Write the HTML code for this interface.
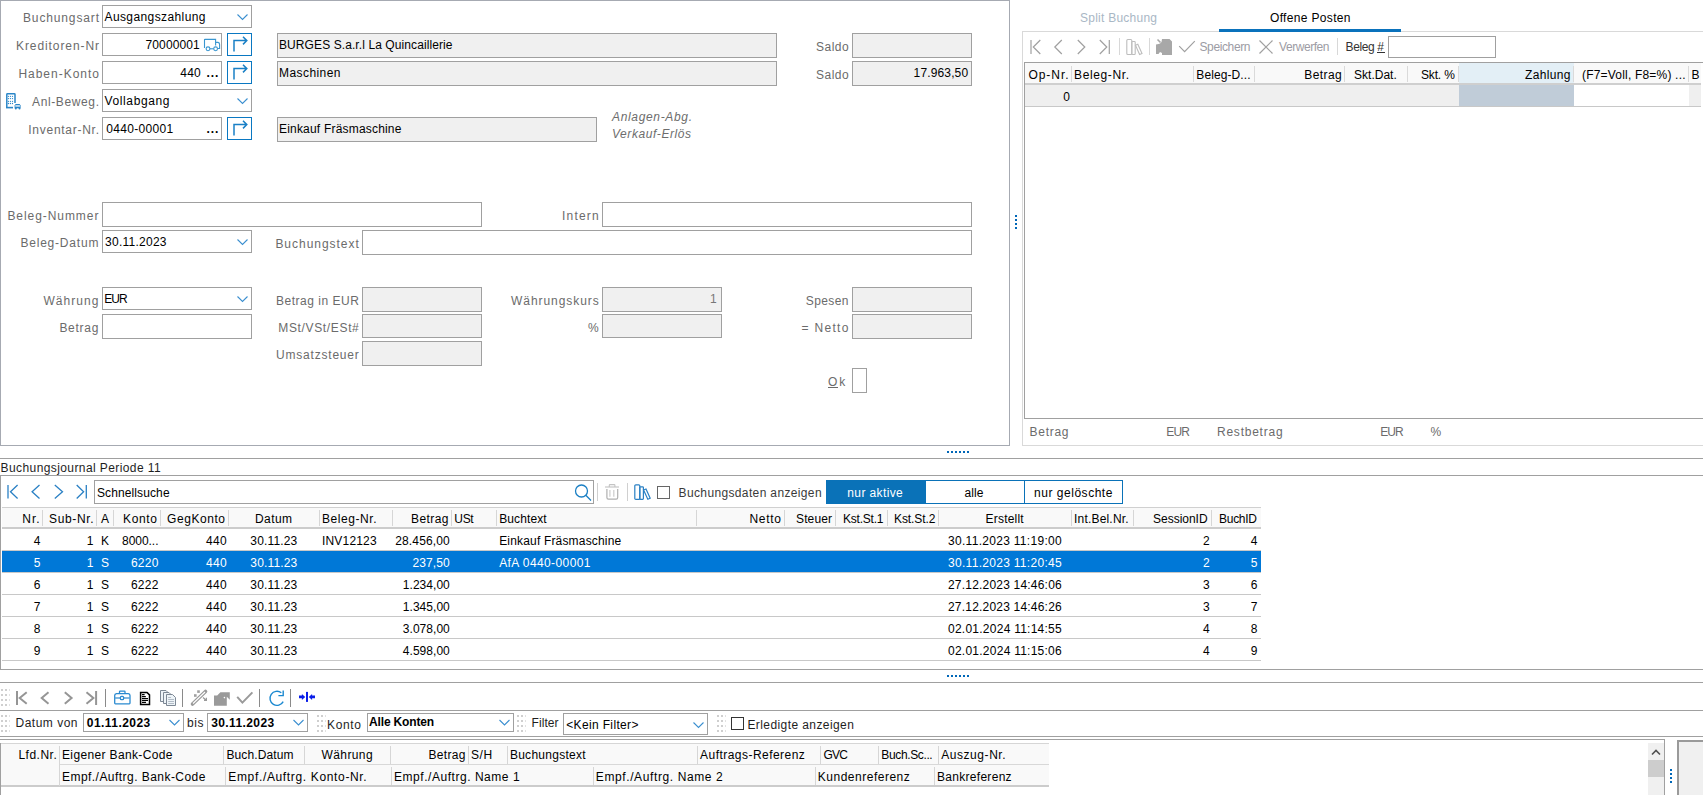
<!DOCTYPE html>
<html><head><meta charset="utf-8"><style>
html,body{margin:0;padding:0;width:1703px;height:795px;overflow:hidden;background:#fff;position:relative}
.a{position:absolute;box-sizing:content-box}
.t{position:absolute;white-space:nowrap;font-family:"Liberation Sans",sans-serif}
svg.a{overflow:visible}
</style></head><body>
<div class="a" style="left:0px;top:0px;width:1008px;height:444px;border:1px solid #a6aab2;background:#fff;"></div>
<div class="t" style="left:23.00px;top:9.84px;font-size:12px;line-height:16px;color:#6b6b6b;letter-spacing:0.862px;">Buchungsart</div>
<div class="t" style="left:16.00px;top:37.84px;font-size:12px;line-height:16px;color:#6b6b6b;letter-spacing:0.914px;">Kreditoren-Nr</div>
<div class="t" style="left:18.40px;top:65.84px;font-size:12px;line-height:16px;color:#6b6b6b;letter-spacing:0.988px;">Haben-Konto</div>
<div class="t" style="left:32.00px;top:93.84px;font-size:12px;line-height:16px;color:#6b6b6b;letter-spacing:0.626px;">Anl-Beweg.</div>
<div class="t" style="left:28.30px;top:121.84px;font-size:12px;line-height:16px;color:#6b6b6b;letter-spacing:0.728px;">Inventar-Nr.</div>
<div class="a" style="left:102px;top:5px;width:148px;height:21px;border:1px solid #a0a0a0;background:#fff;"></div>
<svg class="a" style="left:237px;top:14px;" width="11" height="6" viewBox="0 0 11 6"><polyline points="0.5,0.5 5.5,5.5 10.5,0.5" fill="none" stroke="#3b8fd0" stroke-width="1.1"/></svg>
<div class="t" style="left:104.50px;top:8.84px;font-size:12px;line-height:16px;color:#000;letter-spacing:0.399px;">Ausgangszahlung</div>
<div class="a" style="left:102px;top:89px;width:148px;height:21px;border:1px solid #a0a0a0;background:#fff;"></div>
<svg class="a" style="left:237px;top:98px;" width="11" height="6" viewBox="0 0 11 6"><polyline points="0.5,0.5 5.5,5.5 10.5,0.5" fill="none" stroke="#3b8fd0" stroke-width="1.1"/></svg>
<div class="t" style="left:104.50px;top:92.84px;font-size:12px;line-height:16px;color:#000;letter-spacing:0.623px;">Vollabgang</div>
<div class="a" style="left:102px;top:33px;width:118px;height:21px;border:1px solid #a0a0a0;background:#fff;"></div>
<div class="t" style="left:145.60px;top:36.84px;font-size:12px;line-height:16px;color:#000;letter-spacing:0.087px;">70000001</div>
<svg class="a" style="left:202px;top:36px;" width="20" height="16" viewBox="0 0 20 16"><g fill="none" stroke="#3a96d0" stroke-width="1.1"><path d="M2.5,12 V3.6 Q2.5,3.4 3,3.4 H13.6 V9.5"/><path d="M13.6,6.4 H16 Q17.6,6.6 17.6,8.5 V12.5 H16"/><circle cx="6" cy="12.8" r="1.9"/><circle cx="13.6" cy="12.8" r="1.9"/><path d="M8,12.8 H11.6"/></g></svg>
<div class="a" style="left:227px;top:33px;width:23px;height:21px;border:1px solid #0a78c2;background:#fff;"></div>
<svg class="a" style="left:227px;top:33px;" width="25" height="23" viewBox="0 0 25 23"><path d="M7,18.5 V7.6 H19.6 M16,3.8 L19.8,7.6 L16,11.4" fill="none" stroke="#1a80c6" stroke-width="1.5"/></svg>
<div class="a" style="left:102px;top:61px;width:118px;height:21px;border:1px solid #a0a0a0;background:#fff;"></div>
<div class="t" style="left:180.20px;top:64.84px;font-size:12px;line-height:16px;color:#000;letter-spacing:0.289px;">440</div>
<div class="t" style="left:206.50px;top:64.84px;font-size:12px;line-height:16px;color:#000;letter-spacing:0.900px;font-weight:bold;">...</div>
<div class="a" style="left:227px;top:61px;width:23px;height:21px;border:1px solid #0a78c2;background:#fff;"></div>
<svg class="a" style="left:227px;top:61px;" width="25" height="23" viewBox="0 0 25 23"><path d="M7,18.5 V7.6 H19.6 M16,3.8 L19.8,7.6 L16,11.4" fill="none" stroke="#1a80c6" stroke-width="1.5"/></svg>
<div class="a" style="left:102px;top:117px;width:118px;height:21px;border:1px solid #a0a0a0;background:#fff;"></div>
<div class="t" style="left:106.20px;top:120.84px;font-size:12px;line-height:16px;color:#000;letter-spacing:0.326px;">0440-00001</div>
<div class="t" style="left:206.50px;top:120.84px;font-size:12px;line-height:16px;color:#000;letter-spacing:0.900px;font-weight:bold;">...</div>
<div class="a" style="left:227px;top:117px;width:23px;height:21px;border:1px solid #0a78c2;background:#fff;"></div>
<svg class="a" style="left:227px;top:117px;" width="25" height="23" viewBox="0 0 25 23"><path d="M7,18.5 V7.6 H19.6 M16,3.8 L19.8,7.6 L16,11.4" fill="none" stroke="#1a80c6" stroke-width="1.5"/></svg>
<svg class="a" style="left:0px;top:88px;" width="24" height="24" viewBox="0 0 24 24"><path d="M6.8,19.6 V6.4 Q6.8,5.7 7.5,5.7 H14.3 Q15,5.7 15,6.4 V15" fill="none" stroke="#2a86c8" stroke-width="1.5"/><path d="M6,19.6 H13" stroke="#2a86c8" stroke-width="1.6"/><g fill="#2a86c8"><circle cx="8.45" cy="8.3" r="0.65"/><circle cx="8.45" cy="10.6" r="0.65"/><circle cx="8.45" cy="13.3" r="0.65"/><circle cx="8.45" cy="15.5" r="0.65"/><circle cx="10.45" cy="8.3" r="0.65"/><circle cx="10.45" cy="10.6" r="0.65"/><circle cx="10.45" cy="13.3" r="0.65"/><circle cx="10.45" cy="15.5" r="0.65"/><circle cx="12.5" cy="8.3" r="0.65"/><circle cx="12.5" cy="10.6" r="0.65"/><circle cx="12.5" cy="13.3" r="0.65"/><circle cx="12.5" cy="15.5" r="0.65"/></g><path d="M14.6,20.2 V17.6 L15.6,16 H19.6 L20.6,17.6 V20.2 Z" fill="#2a86c8"/><rect x="15.3" y="17.3" width="4.6" height="1.3" fill="#fff"/><circle cx="15.8" cy="20.4" r="1" fill="#2a86c8"/><circle cx="19.5" cy="20.4" r="1" fill="#2a86c8"/></svg>
<div class="a" style="left:277px;top:33px;width:498px;height:23px;border:1px solid #a0a0a0;background:#f0f0f0;"></div>
<div class="t" style="left:279.00px;top:36.84px;font-size:12px;line-height:16px;color:#000;letter-spacing:0.092px;">BURGES S.a.r.l La Quincaillerie</div>
<div class="a" style="left:277px;top:61px;width:498px;height:23px;border:1px solid #a0a0a0;background:#f0f0f0;"></div>
<div class="t" style="left:279.00px;top:64.84px;font-size:12px;line-height:16px;color:#000;letter-spacing:0.433px;">Maschinen</div>
<div class="a" style="left:277px;top:117px;width:318px;height:23px;border:1px solid #a0a0a0;background:#f0f0f0;"></div>
<div class="t" style="left:279.00px;top:120.84px;font-size:12px;line-height:16px;color:#000;letter-spacing:0.194px;">Einkauf Fräsmaschine</div>
<div class="t" style="left:816.00px;top:38.84px;font-size:12px;line-height:16px;color:#6b6b6b;letter-spacing:0.477px;">Saldo</div>
<div class="t" style="left:816.00px;top:66.84px;font-size:12px;line-height:16px;color:#6b6b6b;letter-spacing:0.477px;">Saldo</div>
<div class="a" style="left:852px;top:33px;width:118px;height:23px;border:1px solid #a0a0a0;background:#f0f0f0;"></div>
<div class="a" style="left:852px;top:61px;width:118px;height:23px;border:1px solid #a0a0a0;background:#f0f0f0;"></div>
<div class="t" style="left:913.60px;top:64.84px;font-size:12px;line-height:16px;color:#000;letter-spacing:0.139px;">17.963,50</div>
<div class="t" style="left:612.00px;top:108.84px;font-size:12px;line-height:16px;color:#6d6d6d;letter-spacing:0.661px;font-style:italic;">Anlagen-Abg.</div>
<div class="t" style="left:612.00px;top:125.84px;font-size:12px;line-height:16px;color:#6d6d6d;letter-spacing:0.563px;font-style:italic;">Verkauf-Erlös</div>
<div class="t" style="left:7.40px;top:207.84px;font-size:12px;line-height:16px;color:#6b6b6b;letter-spacing:0.937px;">Beleg-Nummer</div>
<div class="a" style="left:102px;top:202px;width:378px;height:23px;border:1px solid #a0a0a0;background:#fff;"></div>
<div class="t" style="left:562.00px;top:207.84px;font-size:12px;line-height:16px;color:#6b6b6b;letter-spacing:1.203px;">Intern</div>
<div class="a" style="left:602px;top:202px;width:368px;height:23px;border:1px solid #a0a0a0;background:#fff;"></div>
<div class="t" style="left:20.40px;top:234.84px;font-size:12px;line-height:16px;color:#6b6b6b;letter-spacing:0.797px;">Beleg-Datum</div>
<div class="a" style="left:102px;top:230px;width:148px;height:21px;border:1px solid #a0a0a0;background:#fff;"></div>
<svg class="a" style="left:237px;top:239px;" width="11" height="6" viewBox="0 0 11 6"><polyline points="0.5,0.5 5.5,5.5 10.5,0.5" fill="none" stroke="#3b8fd0" stroke-width="1.1"/></svg>
<div class="t" style="left:105.10px;top:233.84px;font-size:12px;line-height:16px;color:#000;letter-spacing:0.248px;">30.11.2023</div>
<div class="t" style="left:275.40px;top:235.84px;font-size:12px;line-height:16px;color:#6b6b6b;letter-spacing:0.971px;">Buchungstext</div>
<div class="a" style="left:362px;top:230px;width:608px;height:23px;border:1px solid #a0a0a0;background:#fff;"></div>
<div class="t" style="left:43.40px;top:292.84px;font-size:12px;line-height:16px;color:#6b6b6b;letter-spacing:1.051px;">Währung</div>
<div class="a" style="left:102px;top:287px;width:148px;height:21px;border:1px solid #a0a0a0;background:#fff;"></div>
<svg class="a" style="left:237px;top:296px;" width="11" height="6" viewBox="0 0 11 6"><polyline points="0.5,0.5 5.5,5.5 10.5,0.5" fill="none" stroke="#3b8fd0" stroke-width="1.1"/></svg>
<div class="t" style="left:104.20px;top:290.84px;font-size:12px;line-height:16px;color:#000;letter-spacing:-0.918px;">EUR</div>
<div class="t" style="left:59.40px;top:319.84px;font-size:12px;line-height:16px;color:#6b6b6b;letter-spacing:0.729px;">Betrag</div>
<div class="a" style="left:102px;top:314px;width:148px;height:23px;border:1px solid #a0a0a0;background:#fff;"></div>
<div class="t" style="left:276.00px;top:292.84px;font-size:12px;line-height:16px;color:#6b6b6b;letter-spacing:0.508px;">Betrag in EUR</div>
<div class="a" style="left:362px;top:287px;width:118px;height:23px;border:1px solid #a0a0a0;background:#f0f0f0;"></div>
<div class="t" style="left:278.30px;top:319.84px;font-size:12px;line-height:16px;color:#6b6b6b;letter-spacing:0.649px;">MSt/VSt/ESt#</div>
<div class="a" style="left:362px;top:314px;width:118px;height:22px;border:1px solid #a0a0a0;background:#f0f0f0;"></div>
<div class="t" style="left:276.00px;top:346.84px;font-size:12px;line-height:16px;color:#6b6b6b;letter-spacing:0.798px;">Umsatzsteuer</div>
<div class="a" style="left:362px;top:341px;width:118px;height:23px;border:1px solid #a0a0a0;background:#f0f0f0;"></div>
<div class="t" style="left:511.00px;top:292.84px;font-size:12px;line-height:16px;color:#6b6b6b;letter-spacing:0.940px;">Währungskurs</div>
<div class="a" style="left:602px;top:287px;width:118px;height:23px;border:1px solid #a0a0a0;background:#f0f0f0;"></div>
<div class="t" style="left:710.03px;top:290.84px;font-size:12px;line-height:16px;color:#777;letter-spacing:0.450px;">1</div>
<div class="t" style="left:588.03px;top:319.84px;font-size:12px;line-height:16px;color:#6b6b6b;letter-spacing:0.450px;">%</div>
<div class="a" style="left:602px;top:314px;width:118px;height:22px;border:1px solid #a0a0a0;background:#f0f0f0;"></div>
<div class="t" style="left:805.80px;top:292.84px;font-size:12px;line-height:16px;color:#6b6b6b;letter-spacing:0.380px;">Spesen</div>
<div class="a" style="left:852px;top:287px;width:118px;height:23px;border:1px solid #a0a0a0;background:#f0f0f0;"></div>
<div class="t" style="left:801.60px;top:319.84px;font-size:12px;line-height:16px;color:#6b6b6b;letter-spacing:1.296px;">= Netto</div>
<div class="a" style="left:852px;top:314px;width:118px;height:23px;border:1px solid #a0a0a0;background:#f0f0f0;"></div>
<div class="t" style="left:828.00px;top:373.84px;font-size:12px;line-height:16px;color:#6b6b6b;letter-spacing:1.966px;">Ok</div>
<div class="a" style="left:828px;top:387px;width:10px;height:1px;background:#6b6b6b"></div>
<div class="a" style="left:852px;top:368px;width:13px;height:23px;border:1px solid #a0a0a0;background:#fff;"></div>
<div class="a" style="left:947px;top:451px;width:2px;height:2px;background:#0067b8"></div>
<div class="a" style="left:951px;top:451px;width:2px;height:2px;background:#0067b8"></div>
<div class="a" style="left:955px;top:451px;width:2px;height:2px;background:#0067b8"></div>
<div class="a" style="left:959px;top:451px;width:2px;height:2px;background:#0067b8"></div>
<div class="a" style="left:963px;top:451px;width:2px;height:2px;background:#0067b8"></div>
<div class="a" style="left:967px;top:451px;width:2px;height:2px;background:#0067b8"></div>
<div class="a" style="left:1015px;top:215px;width:2px;height:2px;background:#0067b8"></div>
<div class="a" style="left:1015px;top:219px;width:2px;height:2px;background:#0067b8"></div>
<div class="a" style="left:1015px;top:223px;width:2px;height:2px;background:#0067b8"></div>
<div class="a" style="left:1015px;top:227px;width:2px;height:2px;background:#0067b8"></div>
<div class="t" style="left:1080.00px;top:9.84px;font-size:12px;line-height:16px;color:#a9b7c5;letter-spacing:0.245px;">Split Buchung</div>
<div class="t" style="left:1270.00px;top:9.84px;font-size:12px;line-height:16px;color:#000;letter-spacing:0.333px;">Offene Posten</div>
<div class="a" style="left:1219px;top:29px;width:182px;height:3px;background:#0a72bc"></div>
<div class="a" style="left:1022px;top:31px;width:197px;height:1px;background:#d9d9d9"></div>
<div class="a" style="left:1401px;top:31px;width:302px;height:1px;background:#d9d9d9"></div>
<div class="a" style="left:1022px;top:31px;width:1px;height:415px;background:#d9d9d9"></div>
<div class="a" style="left:1022px;top:445px;width:681px;height:1px;background:#d9d9d9"></div>
<svg class="a" style="left:1028.7px;top:40px;" width="83.29999999999995" height="14" viewBox="0 0 83.29999999999995 14"><g fill="none" stroke="#a0a0a0" stroke-width="1.2"><path d="M2.0,0 V14"/><path d="M11.299999999999955,0 L4.2999999999999545,7.0 L11.299999999999955,14"/><path d="M32.799999999999955,0 L25.799999999999955,7.0 L32.799999999999955,14"/><path d="M48.799999999999955,0 L55.799999999999955,7.0 L48.799999999999955,14"/><path d="M70.79999999999995,0 L77.79999999999995,7.0 L70.79999999999995,14"/><path d="M80.29999999999995,0 V14"/></g></svg>
<div class="a" style="left:1119px;top:38px;width:1px;height:17px;background:#d8d8d8"></div>
<svg class="a" style="left:1125px;top:38px;" width="18" height="18" viewBox="0 0 18 18"><g fill="none" stroke="#bdbdbd" stroke-width="1.1"><rect x="1.8" y="1.5" width="5" height="15" rx="1"/><rect x="6.8" y="3.5" width="3.4" height="13" rx="0.8"/><path d="M10.5,7.2 L12.8,6.3 L17,15.5 L14.6,16.5 Z"/></g></svg>
<div class="a" style="left:1149px;top:38px;width:1px;height:17px;background:#d8d8d8"></div>
<svg class="a" style="left:1155px;top:38px;" width="18" height="18" viewBox="0 0 18 18"><path fill="#a8a8a8" d="M7,1 H14.5 L17,3.5 V17 H7 V15 L5,14 L3.5,16 H1 V6.5 L3.5,6 L5,5.5 L6.5,4 Z"/><path d="M2.5,1.5 L5.5,4.5" stroke="#a8a8a8" stroke-width="1.6"/></svg>
<svg class="a" style="left:1178px;top:40px;" width="18" height="13" viewBox="0 0 18 13"><path d="M1.2,6.2 L6.6,11.6 L16.8,1.2" fill="none" stroke="#a0a0a0" stroke-width="1.2"/></svg>
<div class="t" style="left:1199.50px;top:38.84px;font-size:12px;line-height:16px;color:#9c9ca4;letter-spacing:-0.380px;">Speichern</div>
<svg class="a" style="left:1258px;top:39px;" width="16" height="16" viewBox="0 0 16 16"><path d="M1.5,1.5 L14.5,14.5 M14.5,1.5 L1.5,14.5" fill="none" stroke="#a0a0a0" stroke-width="1.2"/></svg>
<div class="t" style="left:1279.00px;top:38.84px;font-size:12px;line-height:16px;color:#9c9ca4;letter-spacing:-0.442px;">Verwerfen</div>
<div class="a" style="left:1337px;top:38px;width:1px;height:17px;background:#d8d8d8"></div>
<div class="t" style="left:1345.50px;top:38.84px;font-size:12px;line-height:16px;color:#333;letter-spacing:-0.367px;">Beleg #</div>
<div class="a" style="left:1377px;top:52px;width:8px;height:1px;background:#333"></div>
<div class="a" style="left:1388px;top:36px;width:106px;height:20px;border:1px solid #a0a0a0;background:#fff;"></div>
<div class="a" style="left:1024px;top:62px;width:1px;height:357px;background:#a0a0a0"></div>
<div class="a" style="left:1024px;top:62px;width:679px;height:1px;background:#a0a0a0"></div>
<div class="a" style="left:1024px;top:418px;width:679px;height:1px;background:#a0a0a0"></div>
<div class="a" style="left:1025px;top:63px;width:676px;height:20px;background:#f9f9f9"></div>
<div class="a" style="left:1459px;top:63px;width:115px;height:20px;background:#e3eff6"></div>
<div class="a" style="left:1025px;top:83px;width:676px;height:2px;background:#cfcfcf"></div>
<div class="a" style="left:1025px;top:85px;width:676px;height:21px;background:#efefef"></div>
<div class="a" style="left:1459px;top:85px;width:115px;height:21px;background:#c0ccd8"></div>
<div class="a" style="left:1574px;top:85px;width:115px;height:21px;background:#ffffff"></div>
<div class="a" style="left:1025px;top:106px;width:676px;height:1px;background:#c8c8c8"></div>
<div class="a" style="left:1071px;top:66px;width:1px;height:16px;background:#dadada"></div>
<div class="a" style="left:1193px;top:66px;width:1px;height:16px;background:#dadada"></div>
<div class="a" style="left:1254px;top:66px;width:1px;height:16px;background:#dadada"></div>
<div class="a" style="left:1344px;top:66px;width:1px;height:16px;background:#dadada"></div>
<div class="a" style="left:1407px;top:66px;width:1px;height:16px;background:#dadada"></div>
<div class="a" style="left:1458px;top:66px;width:1px;height:16px;background:#dadada"></div>
<div class="a" style="left:1573px;top:66px;width:1px;height:16px;background:#dadada"></div>
<div class="a" style="left:1688px;top:66px;width:1px;height:16px;background:#dadada"></div>
<div class="t" style="left:1028.50px;top:66.84px;font-size:12px;line-height:16px;color:#000;letter-spacing:0.932px;">Op-Nr.</div>
<div class="t" style="left:1074.00px;top:66.84px;font-size:12px;line-height:16px;color:#000;letter-spacing:0.622px;">Beleg-Nr.</div>
<div class="t" style="left:1196.30px;top:66.84px;font-size:12px;line-height:16px;color:#000;letter-spacing:0.093px;">Beleg-D...</div>
<div class="t" style="left:1304.30px;top:66.84px;font-size:12px;line-height:16px;color:#000;letter-spacing:0.409px;">Betrag</div>
<div class="t" style="left:1354.00px;top:66.84px;font-size:12px;line-height:16px;color:#000;letter-spacing:0.017px;">Skt.Dat.</div>
<div class="t" style="left:1421.00px;top:66.84px;font-size:12px;line-height:16px;color:#000;letter-spacing:-0.175px;">Skt. %</div>
<div class="t" style="left:1525.00px;top:66.84px;font-size:12px;line-height:16px;color:#000;letter-spacing:0.339px;">Zahlung</div>
<div class="t" style="left:1582.00px;top:66.84px;font-size:12px;line-height:16px;color:#000;letter-spacing:0.192px;">(F7=Voll, F8=%) ...</div>
<div class="t" style="left:1691.50px;top:66.84px;font-size:12px;line-height:16px;color:#000;letter-spacing:0.450px;">B</div>
<div class="t" style="left:1063.33px;top:88.84px;font-size:12px;line-height:16px;color:#000;letter-spacing:0.450px;">0</div>
<div class="t" style="left:1029.50px;top:423.84px;font-size:12px;line-height:16px;color:#6b6b6b;letter-spacing:0.729px;">Betrag</div>
<div class="t" style="left:1166.30px;top:423.84px;font-size:12px;line-height:16px;color:#6b6b6b;letter-spacing:-0.918px;">EUR</div>
<div class="t" style="left:1217.00px;top:423.84px;font-size:12px;line-height:16px;color:#6b6b6b;letter-spacing:0.766px;">Restbetrag</div>
<div class="t" style="left:1380.20px;top:423.84px;font-size:12px;line-height:16px;color:#6b6b6b;letter-spacing:-0.968px;">EUR</div>
<div class="t" style="left:1430.40px;top:423.84px;font-size:12px;line-height:16px;color:#6b6b6b;letter-spacing:0.450px;">%</div>
<div class="a" style="left:0px;top:458px;width:1703px;height:1px;background:#a0a0a0"></div>
<div class="t" style="left:0.60px;top:459.84px;font-size:12px;line-height:16px;color:#1e1e1e;letter-spacing:0.404px;">Buchungsjournal Periode 11</div>
<div class="a" style="left:0px;top:475px;width:1703px;height:1px;background:#a0a0a0"></div>
<div class="a" style="left:0px;top:475px;width:1px;height:195px;background:#a0a0a0"></div>
<div class="a" style="left:0px;top:669px;width:1703px;height:1px;background:#a0a0a0"></div>
<svg class="a" style="left:6.300000000000001px;top:485px;" width="83.3" height="13.5" viewBox="0 0 83.3 13.5"><g fill="none" stroke="#2a80c4" stroke-width="1.3"><path d="M2.0,0 V13.5"/><path d="M11.599999999999998,0 L4.5,6.75 L11.599999999999998,13.5"/><path d="M33.5,0 L26.099999999999998,6.75 L33.5,13.5"/><path d="M48.8,0 L56.5,6.75 L48.8,13.5"/><path d="M70.7,0 L77.60000000000001,6.75 L70.7,13.5"/><path d="M80.3,0 V13.5"/></g></svg>
<div class="a" style="left:94px;top:480px;width:498px;height:22px;border:1px solid #a0a0a0;background:#fff;"></div>
<div class="t" style="left:96.90px;top:484.84px;font-size:12px;line-height:16px;color:#000;letter-spacing:0.120px;">Schnellsuche</div>
<svg class="a" style="left:573px;top:483px;" width="20" height="19" viewBox="0 0 20 19"><g fill="none" stroke="#1a7fc4" stroke-width="1.3"><circle cx="8.5" cy="8" r="6"/><path d="M12.8,12.3 L18,17.5"/></g></svg>
<div class="a" style="left:597px;top:483px;width:1px;height:18px;background:#d0d0d0"></div>
<svg class="a" style="left:600px;top:480px;" width="24" height="24" viewBox="0 0 24 24"><path d="M5,7 H19" stroke="#d2d2d2" stroke-width="1.5"/><path d="M9.3,7 V5.3 Q9.3,4.6 10,4.6 H14.2 Q14.9,4.6 14.9,5.3 V7" fill="none" stroke="#c4c4c4" stroke-width="1.1"/><path d="M6.9,9 V17.6 Q6.9,19.2 8.4,19.2 H16.2 Q17.7,19.2 17.7,17.6 V9" fill="none" stroke="#b0b0b0" stroke-width="1.2"/><path d="M9.9,10 V16.8 M13.8,10 V16.8" stroke="#d0d0d0" stroke-width="1.3"/></svg>
<div class="a" style="left:627px;top:483px;width:1px;height:18px;background:#d0d0d0"></div>
<svg class="a" style="left:633px;top:483px;" width="18" height="18" viewBox="0 0 18 18"><g fill="none" stroke="#2a80c4" stroke-width="1.2"><rect x="1.8" y="1.8" width="5" height="14.6" rx="1"/><rect x="6.8" y="3.8" width="3.6" height="12.6" rx="0.8"/><path d="M10.6,7 L13,6 L17.2,15.2 L14.8,16.3 Z"/></g></svg>
<div class="a" style="left:657px;top:486px;width:11px;height:11px;border:1px solid #666;background:#fff;"></div>
<div class="t" style="left:678.60px;top:484.84px;font-size:12px;line-height:16px;color:#3a3a3a;letter-spacing:0.359px;">Buchungsdaten anzeigen</div>
<div class="a" style="left:826px;top:480px;width:100px;height:24px;background:#0a72b8"></div>
<div class="a" style="left:925px;top:480px;width:196px;height:22px;border:1px solid #0a72b8;background:#fff;"></div>
<div class="a" style="left:1024px;top:480px;width:1px;height:24px;background:#0a72b8"></div>
<div class="t" style="left:847.30px;top:484.84px;font-size:12px;line-height:16px;color:#fff;letter-spacing:0.386px;">nur aktive</div>
<div class="t" style="left:964.40px;top:484.84px;font-size:12px;line-height:16px;color:#000;letter-spacing:0.140px;">alle</div>
<div class="t" style="left:1034.00px;top:484.84px;font-size:12px;line-height:16px;color:#000;letter-spacing:0.529px;">nur gelöschte</div>
<div class="a" style="left:2px;top:507px;width:1259px;height:1px;background:#d0d0d0"></div>
<div class="a" style="left:2px;top:508px;width:1259px;height:19px;background:#f9f9f9"></div>
<div class="a" style="left:2px;top:527px;width:1259px;height:2px;background:#cccccc"></div>
<div class="a" style="left:42px;top:510px;width:1px;height:16px;background:#d6d6d6"></div>
<div class="a" style="left:96px;top:510px;width:1px;height:16px;background:#d6d6d6"></div>
<div class="a" style="left:113px;top:510px;width:1px;height:16px;background:#d6d6d6"></div>
<div class="a" style="left:160px;top:510px;width:1px;height:16px;background:#d6d6d6"></div>
<div class="a" style="left:228px;top:510px;width:1px;height:16px;background:#d6d6d6"></div>
<div class="a" style="left:319px;top:510px;width:1px;height:16px;background:#d6d6d6"></div>
<div class="a" style="left:392px;top:510px;width:1px;height:16px;background:#d6d6d6"></div>
<div class="a" style="left:451px;top:510px;width:1px;height:16px;background:#d6d6d6"></div>
<div class="a" style="left:496px;top:510px;width:1px;height:16px;background:#d6d6d6"></div>
<div class="a" style="left:696px;top:510px;width:1px;height:16px;background:#d6d6d6"></div>
<div class="a" style="left:784px;top:510px;width:1px;height:16px;background:#d6d6d6"></div>
<div class="a" style="left:835px;top:510px;width:1px;height:16px;background:#d6d6d6"></div>
<div class="a" style="left:887px;top:510px;width:1px;height:16px;background:#d6d6d6"></div>
<div class="a" style="left:938px;top:510px;width:1px;height:16px;background:#d6d6d6"></div>
<div class="a" style="left:1071px;top:510px;width:1px;height:16px;background:#d6d6d6"></div>
<div class="a" style="left:1133px;top:510px;width:1px;height:16px;background:#d6d6d6"></div>
<div class="a" style="left:1211px;top:510px;width:1px;height:16px;background:#d6d6d6"></div>
<div class="t" style="left:22.30px;top:510.84px;font-size:12px;line-height:16px;color:#000;letter-spacing:0.982px;">Nr.</div>
<div class="t" style="left:49.00px;top:510.84px;font-size:12px;line-height:16px;color:#000;letter-spacing:0.669px;">Sub-Nr.</div>
<div class="t" style="left:101.00px;top:510.84px;font-size:12px;line-height:16px;color:#000;letter-spacing:0.450px;">A</div>
<div class="t" style="left:123.00px;top:510.84px;font-size:12px;line-height:16px;color:#000;letter-spacing:0.660px;">Konto</div>
<div class="t" style="left:167.00px;top:510.84px;font-size:12px;line-height:16px;color:#000;letter-spacing:0.565px;">GegKonto</div>
<div class="t" style="left:255.00px;top:510.84px;font-size:12px;line-height:16px;color:#000;letter-spacing:0.414px;">Datum</div>
<div class="t" style="left:322.00px;top:510.84px;font-size:12px;line-height:16px;color:#000;letter-spacing:0.572px;">Beleg-Nr.</div>
<div class="t" style="left:411.10px;top:510.84px;font-size:12px;line-height:16px;color:#000;letter-spacing:0.409px;">Betrag</div>
<div class="t" style="left:454.30px;top:510.84px;font-size:12px;line-height:16px;color:#000;letter-spacing:-0.302px;">USt</div>
<div class="t" style="left:499.20px;top:510.84px;font-size:12px;line-height:16px;color:#000;letter-spacing:0.101px;">Buchtext</div>
<div class="t" style="left:749.40px;top:510.84px;font-size:12px;line-height:16px;color:#000;letter-spacing:0.729px;">Netto</div>
<div class="t" style="left:796.00px;top:510.84px;font-size:12px;line-height:16px;color:#000;letter-spacing:0.129px;">Steuer</div>
<div class="t" style="left:843.00px;top:510.84px;font-size:12px;line-height:16px;color:#000;letter-spacing:-0.217px;">Kst.St.1</div>
<div class="t" style="left:894.00px;top:510.84px;font-size:12px;line-height:16px;color:#000;letter-spacing:-0.089px;">Kst.St.2</div>
<div class="t" style="left:985.60px;top:510.84px;font-size:12px;line-height:16px;color:#000;letter-spacing:0.189px;">Erstellt</div>
<div class="t" style="left:1074.00px;top:510.84px;font-size:12px;line-height:16px;color:#000;letter-spacing:0.191px;">Int.Bel.Nr.</div>
<div class="t" style="left:1153.00px;top:510.84px;font-size:12px;line-height:16px;color:#000;letter-spacing:-0.012px;">SessionID</div>
<div class="t" style="left:1219.00px;top:510.84px;font-size:12px;line-height:16px;color:#000;letter-spacing:-0.271px;">BuchID</div>
<div class="a" style="left:2px;top:550px;width:1259px;height:1px;background:#c8c8c8"></div>
<div class="t" style="left:33.83px;top:532.84px;font-size:12px;line-height:16px;color:#000;letter-spacing:0.450px;">4</div>
<div class="t" style="left:86.83px;top:532.84px;font-size:12px;line-height:16px;color:#000;letter-spacing:0.450px;">1</div>
<div class="t" style="left:101.00px;top:532.84px;font-size:12px;line-height:16px;color:#000;letter-spacing:0.450px;">K</div>
<div class="t" style="left:122.00px;top:532.84px;font-size:12px;line-height:16px;color:#000;letter-spacing:-0.033px;">8000...</div>
<div class="t" style="left:206.10px;top:532.84px;font-size:12px;line-height:16px;color:#000;letter-spacing:0.289px;">440</div>
<div class="t" style="left:250.30px;top:532.84px;font-size:12px;line-height:16px;color:#000;letter-spacing:0.168px;">30.11.23</div>
<div class="t" style="left:322.00px;top:532.84px;font-size:12px;line-height:16px;color:#000;letter-spacing:0.175px;">INV12123</div>
<div class="t" style="left:395.20px;top:532.84px;font-size:12px;line-height:16px;color:#000;letter-spacing:0.151px;">28.456,00</div>
<div class="t" style="left:499.20px;top:532.84px;font-size:12px;line-height:16px;color:#000;letter-spacing:0.173px;">Einkauf Fräsmaschine</div>
<div class="t" style="left:948.00px;top:532.84px;font-size:12px;line-height:16px;color:#000;letter-spacing:0.298px;">30.11.2023 11:19:00</div>
<div class="t" style="left:1203.03px;top:532.84px;font-size:12px;line-height:16px;color:#000;letter-spacing:0.450px;">2</div>
<div class="t" style="left:1250.63px;top:532.84px;font-size:12px;line-height:16px;color:#000;letter-spacing:0.450px;">4</div>
<div class="a" style="left:2px;top:551px;width:1259px;height:21px;background:#0078d7"></div>
<div class="a" style="left:2px;top:572px;width:1259px;height:1px;background:#c8c8c8"></div>
<div class="a" style="left:2px;top:550px;width:1259px;height:1px;background:#c8c8c8"></div>
<div class="t" style="left:33.83px;top:554.84px;font-size:12px;line-height:16px;color:#fff;letter-spacing:0.450px;">5</div>
<div class="t" style="left:86.83px;top:554.84px;font-size:12px;line-height:16px;color:#fff;letter-spacing:0.450px;">1</div>
<div class="t" style="left:101.00px;top:554.84px;font-size:12px;line-height:16px;color:#fff;letter-spacing:0.450px;">S</div>
<div class="t" style="left:130.90px;top:554.84px;font-size:12px;line-height:16px;color:#fff;letter-spacing:0.268px;">6220</div>
<div class="t" style="left:206.10px;top:554.84px;font-size:12px;line-height:16px;color:#fff;letter-spacing:0.289px;">440</div>
<div class="t" style="left:250.30px;top:554.84px;font-size:12px;line-height:16px;color:#fff;letter-spacing:0.168px;">30.11.23</div>
<div class="t" style="left:412.40px;top:554.84px;font-size:12px;line-height:16px;color:#fff;letter-spacing:0.139px;">237,50</div>
<div class="t" style="left:499.20px;top:554.84px;font-size:12px;line-height:16px;color:#fff;letter-spacing:0.402px;">AfA 0440-00001</div>
<div class="t" style="left:948.00px;top:554.84px;font-size:12px;line-height:16px;color:#fff;letter-spacing:0.298px;">30.11.2023 11:20:45</div>
<div class="t" style="left:1203.03px;top:554.84px;font-size:12px;line-height:16px;color:#fff;letter-spacing:0.450px;">2</div>
<div class="t" style="left:1250.63px;top:554.84px;font-size:12px;line-height:16px;color:#fff;letter-spacing:0.450px;">5</div>
<div class="a" style="left:2px;top:594px;width:1259px;height:1px;background:#c8c8c8"></div>
<div class="t" style="left:33.83px;top:576.84px;font-size:12px;line-height:16px;color:#000;letter-spacing:0.450px;">6</div>
<div class="t" style="left:86.83px;top:576.84px;font-size:12px;line-height:16px;color:#000;letter-spacing:0.450px;">1</div>
<div class="t" style="left:101.00px;top:576.84px;font-size:12px;line-height:16px;color:#000;letter-spacing:0.450px;">S</div>
<div class="t" style="left:130.90px;top:576.84px;font-size:12px;line-height:16px;color:#000;letter-spacing:0.268px;">6222</div>
<div class="t" style="left:206.10px;top:576.84px;font-size:12px;line-height:16px;color:#000;letter-spacing:0.289px;">440</div>
<div class="t" style="left:250.30px;top:576.84px;font-size:12px;line-height:16px;color:#000;letter-spacing:0.168px;">30.11.23</div>
<div class="t" style="left:402.80px;top:576.84px;font-size:12px;line-height:16px;color:#000;letter-spacing:0.041px;">1.234,00</div>
<div class="t" style="left:948.00px;top:576.84px;font-size:12px;line-height:16px;color:#000;letter-spacing:0.199px;">27.12.2023 14:46:06</div>
<div class="t" style="left:1203.03px;top:576.84px;font-size:12px;line-height:16px;color:#000;letter-spacing:0.450px;">3</div>
<div class="t" style="left:1250.63px;top:576.84px;font-size:12px;line-height:16px;color:#000;letter-spacing:0.450px;">6</div>
<div class="a" style="left:2px;top:616px;width:1259px;height:1px;background:#c8c8c8"></div>
<div class="t" style="left:33.83px;top:598.84px;font-size:12px;line-height:16px;color:#000;letter-spacing:0.450px;">7</div>
<div class="t" style="left:86.83px;top:598.84px;font-size:12px;line-height:16px;color:#000;letter-spacing:0.450px;">1</div>
<div class="t" style="left:101.00px;top:598.84px;font-size:12px;line-height:16px;color:#000;letter-spacing:0.450px;">S</div>
<div class="t" style="left:130.90px;top:598.84px;font-size:12px;line-height:16px;color:#000;letter-spacing:0.268px;">6222</div>
<div class="t" style="left:206.10px;top:598.84px;font-size:12px;line-height:16px;color:#000;letter-spacing:0.289px;">440</div>
<div class="t" style="left:250.30px;top:598.84px;font-size:12px;line-height:16px;color:#000;letter-spacing:0.168px;">30.11.23</div>
<div class="t" style="left:402.80px;top:598.84px;font-size:12px;line-height:16px;color:#000;letter-spacing:0.041px;">1.345,00</div>
<div class="t" style="left:948.00px;top:598.84px;font-size:12px;line-height:16px;color:#000;letter-spacing:0.199px;">27.12.2023 14:46:26</div>
<div class="t" style="left:1203.03px;top:598.84px;font-size:12px;line-height:16px;color:#000;letter-spacing:0.450px;">3</div>
<div class="t" style="left:1250.63px;top:598.84px;font-size:12px;line-height:16px;color:#000;letter-spacing:0.450px;">7</div>
<div class="a" style="left:2px;top:638px;width:1259px;height:1px;background:#c8c8c8"></div>
<div class="t" style="left:33.83px;top:620.84px;font-size:12px;line-height:16px;color:#000;letter-spacing:0.450px;">8</div>
<div class="t" style="left:86.83px;top:620.84px;font-size:12px;line-height:16px;color:#000;letter-spacing:0.450px;">1</div>
<div class="t" style="left:101.00px;top:620.84px;font-size:12px;line-height:16px;color:#000;letter-spacing:0.450px;">S</div>
<div class="t" style="left:130.90px;top:620.84px;font-size:12px;line-height:16px;color:#000;letter-spacing:0.268px;">6222</div>
<div class="t" style="left:206.10px;top:620.84px;font-size:12px;line-height:16px;color:#000;letter-spacing:0.289px;">440</div>
<div class="t" style="left:250.30px;top:620.84px;font-size:12px;line-height:16px;color:#000;letter-spacing:0.168px;">30.11.23</div>
<div class="t" style="left:402.80px;top:620.84px;font-size:12px;line-height:16px;color:#000;letter-spacing:0.041px;">3.078,00</div>
<div class="t" style="left:948.00px;top:620.84px;font-size:12px;line-height:16px;color:#000;letter-spacing:0.249px;">02.01.2024 11:14:55</div>
<div class="t" style="left:1203.03px;top:620.84px;font-size:12px;line-height:16px;color:#000;letter-spacing:0.450px;">4</div>
<div class="t" style="left:1250.63px;top:620.84px;font-size:12px;line-height:16px;color:#000;letter-spacing:0.450px;">8</div>
<div class="a" style="left:2px;top:660px;width:1259px;height:1px;background:#c8c8c8"></div>
<div class="t" style="left:33.83px;top:642.84px;font-size:12px;line-height:16px;color:#000;letter-spacing:0.450px;">9</div>
<div class="t" style="left:86.83px;top:642.84px;font-size:12px;line-height:16px;color:#000;letter-spacing:0.450px;">1</div>
<div class="t" style="left:101.00px;top:642.84px;font-size:12px;line-height:16px;color:#000;letter-spacing:0.450px;">S</div>
<div class="t" style="left:130.90px;top:642.84px;font-size:12px;line-height:16px;color:#000;letter-spacing:0.268px;">6222</div>
<div class="t" style="left:206.10px;top:642.84px;font-size:12px;line-height:16px;color:#000;letter-spacing:0.289px;">440</div>
<div class="t" style="left:250.30px;top:642.84px;font-size:12px;line-height:16px;color:#000;letter-spacing:0.168px;">30.11.23</div>
<div class="t" style="left:402.80px;top:642.84px;font-size:12px;line-height:16px;color:#000;letter-spacing:0.041px;">4.598,00</div>
<div class="t" style="left:948.00px;top:642.84px;font-size:12px;line-height:16px;color:#000;letter-spacing:0.249px;">02.01.2024 11:15:06</div>
<div class="t" style="left:1203.03px;top:642.84px;font-size:12px;line-height:16px;color:#000;letter-spacing:0.450px;">4</div>
<div class="t" style="left:1250.63px;top:642.84px;font-size:12px;line-height:16px;color:#000;letter-spacing:0.450px;">9</div>
<div class="a" style="left:947px;top:675px;width:2px;height:2px;background:#0067b8"></div>
<div class="a" style="left:951px;top:675px;width:2px;height:2px;background:#0067b8"></div>
<div class="a" style="left:955px;top:675px;width:2px;height:2px;background:#0067b8"></div>
<div class="a" style="left:959px;top:675px;width:2px;height:2px;background:#0067b8"></div>
<div class="a" style="left:963px;top:675px;width:2px;height:2px;background:#0067b8"></div>
<div class="a" style="left:967px;top:675px;width:2px;height:2px;background:#0067b8"></div>
<div class="a" style="left:0px;top:682px;width:1703px;height:1px;background:#a0a0a0"></div>
<div class="a" style="left:1px;top:689px;width:2px;height:2px;background:#cfcfcf"></div>
<div class="a" style="left:5px;top:689px;width:2px;height:2px;background:#cfcfcf"></div>
<div class="a" style="left:9px;top:689px;width:1px;height:2px;background:#e2e2e2"></div>
<div class="a" style="left:1px;top:694px;width:2px;height:2px;background:#cfcfcf"></div>
<div class="a" style="left:5px;top:694px;width:2px;height:2px;background:#cfcfcf"></div>
<div class="a" style="left:9px;top:694px;width:1px;height:2px;background:#e2e2e2"></div>
<div class="a" style="left:1px;top:699px;width:2px;height:2px;background:#cfcfcf"></div>
<div class="a" style="left:5px;top:699px;width:2px;height:2px;background:#cfcfcf"></div>
<div class="a" style="left:9px;top:699px;width:1px;height:2px;background:#e2e2e2"></div>
<div class="a" style="left:1px;top:704px;width:2px;height:2px;background:#cfcfcf"></div>
<div class="a" style="left:5px;top:704px;width:2px;height:2px;background:#cfcfcf"></div>
<div class="a" style="left:9px;top:704px;width:1px;height:2px;background:#e2e2e2"></div>
<svg class="a" style="left:14.899999999999999px;top:691px;" width="84.1" height="14" viewBox="0 0 84.1 14"><g fill="none" stroke="#959595" stroke-width="2.0"><path d="M2.0,0 V14"/><path d="M11.700000000000003,1.2 L4.700000000000003,7.0 L11.700000000000003,12.8"/><path d="M33.5,1.2 L26.700000000000003,7.0 L33.5,12.8"/><path d="M49.800000000000004,1.2 L56.6,7.0 L49.800000000000004,12.8"/><path d="M71.5,1.2 L78.4,7.0 L71.5,12.8"/><path d="M81.1,0 V14"/></g></svg>
<div class="a" style="left:105px;top:689px;width:1px;height:18px;background:#8a8a8a"></div>
<svg class="a" style="left:110px;top:686px;" width="24" height="24" viewBox="0 0 24 24"><g fill="none" stroke="#2a8ad0" stroke-width="1.3"><path d="M4.7,17.1 V9.6 Q4.7,7.8 6.5,7.6 H18.3 Q20,7.8 20,9.6 V17.1 Q20,17.8 19.3,17.8 H5.4 Q4.7,17.8 4.7,17.1 Z"/><path d="M9.5,7.5 V5.8 Q9.5,5.2 10.1,5.2 H14.4 Q15,5.2 15,5.8 V7.5"/><path d="M4.7,12 H10.4 M13.6,12 H20" stroke="#5aa3d8" stroke-width="1.4"/><rect x="10.4" y="10.4" width="3.2" height="3.2" rx="1.2"/></g></svg>
<svg class="a" style="left:135px;top:686px;" width="200" height="24" viewBox="0 0 200 24"><path d="M5.6,6.4 H12 L14.5,8.9 V18.6 H5.6 Z" fill="#fff" stroke="#000" stroke-width="1.5"/><path d="M7,8.6 H9.6 M7,10.6 H10.8 M7,12.6 H13 M7,14.5 H13 M7,16.4 H11" stroke="#000" stroke-width="1.1"/><g stroke="#7d8895" stroke-width="1" fill="#eef4f8"><path d="M25.5,4.5 H31 L33,6.5 V15.5 H25.5 Z"/><path d="M28.5,6.5 H34 L36,8.5 V17.5 H28.5 Z"/><path d="M31.5,8.5 H37.5 L40.5,11.5 V19.5 H31.5 Z"/></g><path d="M33.2,11.5 H36 M33.2,13.5 H39 M33.2,15.5 H39 M33.2,17.5 H39" stroke="#a9b4bf" stroke-width="0.9"/><path d="M57.5,18 L70.5,5.5" stroke="#9a9a9a" stroke-width="3.6" stroke-linecap="round"/><path d="M58,17.5 L70,6" stroke="#fff" stroke-width="1.1"/><rect x="62.2" y="4.3" width="2.6" height="2.6" fill="#a0a0a0"/><rect x="59" y="8.2" width="2.6" height="2.6" fill="#a0a0a0"/><path d="M68,11.5 L71.2,14.2 M71.4,11.8 V14.3 H69" stroke="#9a9a9a" stroke-width="1.2" fill="none"/><path d="M79,9.4 H82.2 L85.4,6.2 H94.8 V13.8 L91.8,10.8 V19.7 H79 Z" fill="#9a9a9a"/><circle cx="89.4" cy="11.6" r="0.8" fill="#fff"/><path d="M102.2,10.8 L107.4,16.6 L117.4,6.4" fill="none" stroke="#9a9a9a" stroke-width="2"/><path d="M148.2,15.6 A7,7 0 1 1 146.3,6.8" fill="none" stroke="#1a88d0" stroke-width="1.4"/><path d="M148.2,4.6 V9.6 H143.4" fill="none" stroke="#1a88d0" stroke-width="1.4"/><g fill="#0a1ee8"><rect x="171" y="5.9" width="2" height="10"/><path d="M164,9.6 H166.9 V7.9 L170.2,10.9 L166.9,14 V12.3 H164 Z"/><path d="M180,9.6 H177.1 V7.9 L173.8,10.9 L177.1,14 V12.3 H180 Z"/></g></svg>
<div class="a" style="left:182px;top:689px;width:1px;height:18px;background:#8a8a8a"></div>
<div class="a" style="left:259px;top:689px;width:1px;height:18px;background:#8a8a8a"></div>
<div class="a" style="left:290px;top:689px;width:1px;height:18px;background:#8a8a8a"></div>
<div class="a" style="left:0px;top:710px;width:1703px;height:1px;background:#a0a0a0"></div>
<div class="a" style="left:1px;top:715px;width:2px;height:2px;background:#cfcfcf"></div>
<div class="a" style="left:5px;top:715px;width:2px;height:2px;background:#cfcfcf"></div>
<div class="a" style="left:9px;top:715px;width:1px;height:2px;background:#e2e2e2"></div>
<div class="a" style="left:1px;top:720px;width:2px;height:2px;background:#cfcfcf"></div>
<div class="a" style="left:5px;top:720px;width:2px;height:2px;background:#cfcfcf"></div>
<div class="a" style="left:9px;top:720px;width:1px;height:2px;background:#e2e2e2"></div>
<div class="a" style="left:1px;top:725px;width:2px;height:2px;background:#cfcfcf"></div>
<div class="a" style="left:5px;top:725px;width:2px;height:2px;background:#cfcfcf"></div>
<div class="a" style="left:9px;top:725px;width:1px;height:2px;background:#e2e2e2"></div>
<div class="a" style="left:1px;top:730px;width:2px;height:2px;background:#cfcfcf"></div>
<div class="a" style="left:5px;top:730px;width:2px;height:2px;background:#cfcfcf"></div>
<div class="a" style="left:9px;top:730px;width:1px;height:2px;background:#e2e2e2"></div>
<div class="t" style="left:15.50px;top:714.84px;font-size:12px;line-height:16px;color:#1e1e1e;letter-spacing:0.496px;">Datum von</div>
<div class="a" style="left:83px;top:713px;width:99px;height:17px;border:1px solid #a0a0a0;background:#fff;"></div>
<svg class="a" style="left:169px;top:719px;" width="11" height="7" viewBox="0 0 11 7"><polyline points="0.5,1 5.5,6 10.5,1" fill="none" stroke="#3b8fd0" stroke-width="1.1"/></svg>
<div class="t" style="left:86.80px;top:714.84px;font-size:12px;line-height:16px;color:#000;letter-spacing:0.444px;font-weight:bold;">01.11.2023</div>
<div class="t" style="left:187.00px;top:714.84px;font-size:12px;line-height:16px;color:#1e1e1e;letter-spacing:0.580px;">bis</div>
<div class="a" style="left:207px;top:713px;width:99px;height:17px;border:1px solid #a0a0a0;background:#fff;"></div>
<svg class="a" style="left:293px;top:719px;" width="11" height="7" viewBox="0 0 11 7"><polyline points="0.5,1 5.5,6 10.5,1" fill="none" stroke="#3b8fd0" stroke-width="1.1"/></svg>
<div class="t" style="left:211.20px;top:714.84px;font-size:12px;line-height:16px;color:#000;letter-spacing:0.400px;font-weight:bold;">30.11.2023</div>
<div class="a" style="left:317px;top:715px;width:2px;height:2px;background:#cfcfcf"></div>
<div class="a" style="left:321px;top:715px;width:2px;height:2px;background:#cfcfcf"></div>
<div class="a" style="left:325px;top:715px;width:1px;height:2px;background:#e2e2e2"></div>
<div class="a" style="left:317px;top:720px;width:2px;height:2px;background:#cfcfcf"></div>
<div class="a" style="left:321px;top:720px;width:2px;height:2px;background:#cfcfcf"></div>
<div class="a" style="left:325px;top:720px;width:1px;height:2px;background:#e2e2e2"></div>
<div class="a" style="left:317px;top:725px;width:2px;height:2px;background:#cfcfcf"></div>
<div class="a" style="left:321px;top:725px;width:2px;height:2px;background:#cfcfcf"></div>
<div class="a" style="left:325px;top:725px;width:1px;height:2px;background:#e2e2e2"></div>
<div class="a" style="left:317px;top:730px;width:2px;height:2px;background:#cfcfcf"></div>
<div class="a" style="left:321px;top:730px;width:2px;height:2px;background:#cfcfcf"></div>
<div class="a" style="left:325px;top:730px;width:1px;height:2px;background:#e2e2e2"></div>
<div class="t" style="left:327.00px;top:716.84px;font-size:12px;line-height:16px;color:#1e1e1e;letter-spacing:0.660px;">Konto</div>
<div class="a" style="left:367px;top:713px;width:145px;height:17px;border:1px solid #a0a0a0;background:#fff;"></div>
<svg class="a" style="left:499px;top:719px;" width="11" height="7" viewBox="0 0 11 7"><polyline points="0.5,1 5.5,6 10.5,1" fill="none" stroke="#3b8fd0" stroke-width="1.1"/></svg>
<div class="t" style="left:369.10px;top:713.84px;font-size:12px;line-height:16px;color:#000;letter-spacing:-0.167px;font-weight:bold;">Alle Konten</div>
<div class="a" style="left:517px;top:715px;width:2px;height:2px;background:#cfcfcf"></div>
<div class="a" style="left:521px;top:715px;width:2px;height:2px;background:#cfcfcf"></div>
<div class="a" style="left:525px;top:715px;width:1px;height:2px;background:#e2e2e2"></div>
<div class="a" style="left:517px;top:720px;width:2px;height:2px;background:#cfcfcf"></div>
<div class="a" style="left:521px;top:720px;width:2px;height:2px;background:#cfcfcf"></div>
<div class="a" style="left:525px;top:720px;width:1px;height:2px;background:#e2e2e2"></div>
<div class="a" style="left:517px;top:725px;width:2px;height:2px;background:#cfcfcf"></div>
<div class="a" style="left:521px;top:725px;width:2px;height:2px;background:#cfcfcf"></div>
<div class="a" style="left:525px;top:725px;width:1px;height:2px;background:#e2e2e2"></div>
<div class="a" style="left:517px;top:730px;width:2px;height:2px;background:#cfcfcf"></div>
<div class="a" style="left:521px;top:730px;width:2px;height:2px;background:#cfcfcf"></div>
<div class="a" style="left:525px;top:730px;width:1px;height:2px;background:#e2e2e2"></div>
<div class="t" style="left:531.60px;top:714.84px;font-size:12px;line-height:16px;color:#1e1e1e;letter-spacing:0.066px;">Filter</div>
<div class="a" style="left:563px;top:713px;width:143px;height:20px;border:1px solid #a0a0a0;background:#fff;"></div>
<svg class="a" style="left:693px;top:722px;" width="11" height="6" viewBox="0 0 11 6"><polyline points="0.5,0.5 5.5,5.5 10.5,0.5" fill="none" stroke="#3b8fd0" stroke-width="1.1"/></svg>
<div class="t" style="left:566.20px;top:716.84px;font-size:12px;line-height:16px;color:#000;letter-spacing:0.355px;">&lt;Kein Filter&gt;</div>
<div class="a" style="left:717px;top:715px;width:2px;height:2px;background:#cfcfcf"></div>
<div class="a" style="left:721px;top:715px;width:2px;height:2px;background:#cfcfcf"></div>
<div class="a" style="left:725px;top:715px;width:1px;height:2px;background:#e2e2e2"></div>
<div class="a" style="left:717px;top:720px;width:2px;height:2px;background:#cfcfcf"></div>
<div class="a" style="left:721px;top:720px;width:2px;height:2px;background:#cfcfcf"></div>
<div class="a" style="left:725px;top:720px;width:1px;height:2px;background:#e2e2e2"></div>
<div class="a" style="left:717px;top:725px;width:2px;height:2px;background:#cfcfcf"></div>
<div class="a" style="left:721px;top:725px;width:2px;height:2px;background:#cfcfcf"></div>
<div class="a" style="left:725px;top:725px;width:1px;height:2px;background:#e2e2e2"></div>
<div class="a" style="left:717px;top:730px;width:2px;height:2px;background:#cfcfcf"></div>
<div class="a" style="left:721px;top:730px;width:2px;height:2px;background:#cfcfcf"></div>
<div class="a" style="left:725px;top:730px;width:1px;height:2px;background:#e2e2e2"></div>
<div class="a" style="left:731px;top:717px;width:11px;height:11px;border:1px solid #333;background:#fff;"></div>
<div class="t" style="left:747.40px;top:716.84px;font-size:12px;line-height:16px;color:#1e1e1e;letter-spacing:0.417px;">Erledigte anzeigen</div>
<div class="a" style="left:0px;top:736px;width:1703px;height:1px;background:#a0a0a0"></div>
<div class="a" style="left:0px;top:739px;width:1665px;height:1px;background:#a0a0a0"></div>
<div class="a" style="left:1px;top:743px;width:1048px;height:1px;background:#d6d6d6"></div>
<div class="a" style="left:0px;top:743px;width:1px;height:52px;background:#a0a0a0"></div>
<div class="a" style="left:1px;top:744px;width:1048px;height:41px;background:#f9f9f9"></div>
<div class="a" style="left:1px;top:785px;width:1048px;height:2px;background:#cccccc"></div>
<div class="a" style="left:60px;top:764px;width:989px;height:1px;background:#d8d8d8"></div>
<div class="a" style="left:59px;top:746px;width:1px;height:18px;background:#d6d6d6"></div>
<div class="a" style="left:223px;top:746px;width:1px;height:18px;background:#d6d6d6"></div>
<div class="a" style="left:304px;top:746px;width:1px;height:18px;background:#d6d6d6"></div>
<div class="a" style="left:390px;top:746px;width:1px;height:18px;background:#d6d6d6"></div>
<div class="a" style="left:468px;top:746px;width:1px;height:18px;background:#d6d6d6"></div>
<div class="a" style="left:507px;top:746px;width:1px;height:18px;background:#d6d6d6"></div>
<div class="a" style="left:697px;top:746px;width:1px;height:18px;background:#d6d6d6"></div>
<div class="a" style="left:820px;top:746px;width:1px;height:18px;background:#d6d6d6"></div>
<div class="a" style="left:878px;top:746px;width:1px;height:18px;background:#d6d6d6"></div>
<div class="a" style="left:938px;top:746px;width:1px;height:18px;background:#d6d6d6"></div>
<div class="a" style="left:59px;top:764px;width:1px;height:22px;background:#d6d6d6"></div>
<div class="a" style="left:225px;top:767px;width:1px;height:18px;background:#d6d6d6"></div>
<div class="a" style="left:391px;top:767px;width:1px;height:18px;background:#d6d6d6"></div>
<div class="a" style="left:593px;top:767px;width:1px;height:18px;background:#d6d6d6"></div>
<div class="a" style="left:815px;top:767px;width:1px;height:18px;background:#d6d6d6"></div>
<div class="a" style="left:934px;top:767px;width:1px;height:18px;background:#d6d6d6"></div>
<div class="t" style="left:18.40px;top:746.84px;font-size:12px;line-height:16px;color:#000;letter-spacing:0.508px;">Lfd.Nr.</div>
<div class="t" style="left:62.00px;top:746.84px;font-size:12px;line-height:16px;color:#000;letter-spacing:0.360px;">Eigener Bank-Code</div>
<div class="t" style="left:226.40px;top:746.84px;font-size:12px;line-height:16px;color:#000;letter-spacing:0.130px;">Buch.Datum</div>
<div class="t" style="left:321.60px;top:746.84px;font-size:12px;line-height:16px;color:#000;letter-spacing:0.384px;">Währung</div>
<div class="t" style="left:428.50px;top:746.84px;font-size:12px;line-height:16px;color:#000;letter-spacing:0.289px;">Betrag</div>
<div class="t" style="left:470.90px;top:746.84px;font-size:12px;line-height:16px;color:#000;letter-spacing:0.698px;">S/H</div>
<div class="t" style="left:509.90px;top:746.84px;font-size:12px;line-height:16px;color:#000;letter-spacing:0.271px;">Buchungstext</div>
<div class="t" style="left:700.10px;top:746.84px;font-size:12px;line-height:16px;color:#000;letter-spacing:0.457px;">Auftrags-Referenz</div>
<div class="t" style="left:823.50px;top:746.84px;font-size:12px;line-height:16px;color:#000;letter-spacing:-0.852px;">GVC</div>
<div class="t" style="left:881.30px;top:746.84px;font-size:12px;line-height:16px;color:#000;letter-spacing:-0.366px;">Buch.Sc...</div>
<div class="t" style="left:941.20px;top:746.84px;font-size:12px;line-height:16px;color:#000;letter-spacing:0.560px;">Auszug-Nr.</div>
<div class="t" style="left:62.00px;top:768.84px;font-size:12px;line-height:16px;color:#000;letter-spacing:0.455px;">Empf./Auftrg. Bank-Code</div>
<div class="t" style="left:228.30px;top:768.84px;font-size:12px;line-height:16px;color:#000;letter-spacing:0.652px;">Empf./Auftrg. Konto-Nr.</div>
<div class="t" style="left:394.00px;top:768.84px;font-size:12px;line-height:16px;color:#000;letter-spacing:0.538px;">Empf./Auftrg. Name 1</div>
<div class="t" style="left:595.80px;top:768.84px;font-size:12px;line-height:16px;color:#000;letter-spacing:0.606px;">Empf./Auftrg. Name 2</div>
<div class="t" style="left:817.80px;top:768.84px;font-size:12px;line-height:16px;color:#000;letter-spacing:0.508px;">Kundenreferenz</div>
<div class="t" style="left:937.00px;top:768.84px;font-size:12px;line-height:16px;color:#000;letter-spacing:0.293px;">Bankreferenz</div>
<div class="a" style="left:1648px;top:743px;width:16px;height:52px;background:#f0f0f0"></div>
<svg class="a" style="left:1648px;top:745px;" width="16" height="14" viewBox="0 0 16 14"><path d="M4,9.5 L8,5.5 L12,9.5" fill="none" stroke="#505050" stroke-width="1.6"/></svg>
<div class="a" style="left:1648px;top:760px;width:16px;height:17px;background:#cdcdcd"></div>
<div class="a" style="left:1664px;top:739px;width:1px;height:56px;background:#a0a0a0"></div>
<div class="a" style="left:1670px;top:769px;width:2px;height:2px;background:#0067b8"></div>
<div class="a" style="left:1670px;top:773px;width:2px;height:2px;background:#0067b8"></div>
<div class="a" style="left:1670px;top:777px;width:2px;height:2px;background:#0067b8"></div>
<div class="a" style="left:1670px;top:781px;width:2px;height:2px;background:#0067b8"></div>
<div class="a" style="left:1677px;top:740px;width:26px;height:55px;background:#f0f0f0"></div>
<div class="a" style="left:1677px;top:740px;width:2px;height:55px;background:#9a9a9a"></div>
<div class="a" style="left:1677px;top:740px;width:26px;height:2px;background:#9a9a9a"></div>
</body></html>
